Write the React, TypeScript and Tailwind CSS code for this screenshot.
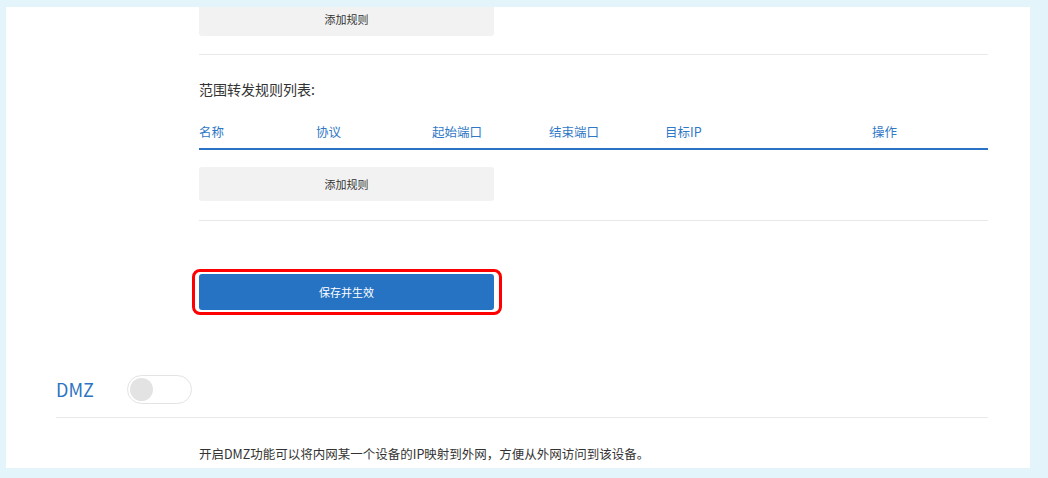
import React from 'react'

const font = { fontFamily: '"Noto Sans CJK SC", "Noto Sans", sans-serif' }

const columns = ['名称', '协议', '起始端口', '结束端口', '目标IP', '操作']

const AddRuleButton = () => (
  <button className="w-[295px] h-[34px] rounded-[3px] bg-[#f2f2f2] text-[11px] text-[#333]">
    添加规则
  </button>
)

export default function App() {
  return (
    <div className="w-[1048px] h-[478px] bg-[#e3f4fb] pt-[7px] pl-[6px] overflow-hidden" style={font}>
      <div className="w-[1024px] h-[461px] bg-white overflow-hidden">
        {/* port forwarding section (scrolled) */}
        <div className="ml-[193px] w-[789px] -mt-[5px] flex flex-col">
          <AddRuleButton />
          <div className="mt-[18px] h-px bg-[#e9e9e9]" />

          <p className="mt-[24px] text-[14px] leading-[20px] text-[#333]">范围转发规则列表:</p>

          <div className="mt-[23px] grid grid-cols-[117px_116px_117px_116px_207px_1fr] border-b-2 border-[#2a72c3] pb-[6px]">
            {columns.map((c) => (
              <span key={c} className="text-[12.5px] leading-[20px] text-[#2f78c6]">
                {c}
              </span>
            ))}
          </div>

          <div className="mt-[17px]">
            <AddRuleButton />
          </div>
          <div className="mt-[19px] h-px bg-[#e9e9e9]" />

          <div className="mt-[48px] -ml-[7px] w-[310px] rounded-[8px] border-[3px] border-[#ff0000] px-[4px] py-[2px]">
            <button className="w-[295px] h-[36px] rounded-[3px] bg-[#2673c3] text-[11px] text-white">
              保存并生效
            </button>
          </div>
        </div>

        {/* DMZ */}
        <div className="ml-[50px] w-[932px] mt-[60px] flex flex-col">
          <div className="flex items-center h-[29px]">
            <span className="w-[71px] text-[18px] text-[#2b73c2]">DMZ</span>
            <div className="w-[65px] h-[29px] rounded-full border border-[#e3e3e3] bg-white flex items-center pl-[2px]">
              <div className="w-[23px] h-[23px] rounded-full bg-[#e3e3e3]" />
            </div>
          </div>
          <div className="mt-[13px] h-px bg-[#e9e9e9]" />
          <p className="mt-[26px] ml-[143px] text-[12.5px] leading-[20px] text-[#333]">
            开启DMZ功能可以将内网某一个设备的IP映射到外网，方便从外网访问到该设备。
          </p>
        </div>
      </div>
    </div>
  )
}
